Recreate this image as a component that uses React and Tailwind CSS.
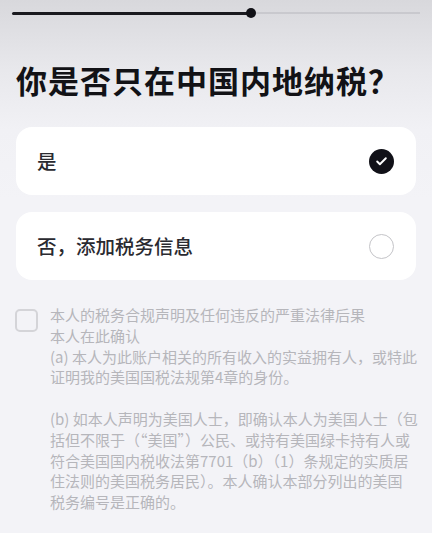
import { Check } from 'lucide-react';

const FONT = { fontFamily: '"Noto Sans CJK SC", "Noto Sans", sans-serif' };

export default function App() {
  return (
    <div
      className="w-[432px] h-[533px] overflow-hidden bg-[linear-gradient(180deg,#d8d8dc_0px,#e8e8ec_70px,#f1f1f5_130px,#f3f3f7_200px)]"
      style={FONT}
    >
      {/* progress */}
      <div className="pt-[8px] px-[12px] flex items-center">
        <div className="h-[3px] w-[238px] bg-[#1a1a1f] rounded-full" />
        <div className="w-[10px] h-[10px] rounded-full bg-[#111116] -ml-[4px]" />
        <div className="h-[1.5px] flex-1 bg-[#c9c9ce]" />
      </div>

      <h1 className="mt-[42px] pl-[16px] text-[31px] leading-[40px] font-bold text-[#121216] tracking-[1px]">
        你是否只在中国内地纳税？
      </h1>

      <div className="mt-[27px] px-[16px] flex flex-col gap-[17px]">
        <div className="h-[68px] bg-white rounded-[16px] flex items-center justify-between pl-[21px] pr-[22px]">
          <span className="text-[19.5px] text-[#2a2a30] font-medium">是</span>
          <span className="w-[25px] h-[25px] rounded-full bg-[#111118] flex items-center justify-center">
            <Check className="w-[13px] h-[13px] text-white" strokeWidth={3.5} />
          </span>
        </div>
        <div className="h-[68px] bg-white rounded-[16px] flex items-center justify-between pl-[21px] pr-[22px]">
          <span className="text-[19.5px] text-[#2a2a30] font-medium">否，添加税务信息</span>
          <span className="w-[25px] h-[25px] rounded-full border-[1.5px] border-[#c4c4c8]" />
        </div>
      </div>

      <div className="mt-[25px] pl-[15px] flex gap-[12px]">
        <div className="mt-[4px] w-[23px] h-[23px] shrink-0 rounded-[5px] border-2 border-[#d4d4d8]" />
        <div className="text-[15px] leading-[20.8px] text-[#b6b6bb] whitespace-nowrap">
          <p>本人的税务合规声明及任何违反的严重法律后果</p>
          <p>本人在此确认</p>
          <p>(a) 本人为此账户相关的所有收入的实益拥有人，或特此</p>
          <p>证明我的美国国税法规第4章的身份。</p>
          <p className="mt-[20.8px]">(b) 如本人声明为美国人士，即确认本人为美国人士（包</p>
          <p>括但不限于（“美国”）公民、或持有美国绿卡持有人或</p>
          <p>符合美国国内税收法第7701（b）（1）条规定的实质居</p>
          <p>住法则的美国税务居民）。本人确认本部分列出的美国</p>
          <p>税务编号是正确的。</p>
          <p className="mt-[20.8px]">如本人声明为非美国人士，即确认本人为非美国人士(包</p>
        </div>
      </div>
    </div>
  );
}
